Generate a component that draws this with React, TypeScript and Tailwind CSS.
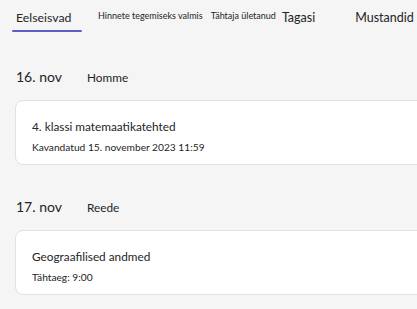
const sections = [
  { date: "16. nov", day: "Homme", title: "4. klassi matemaatikatehted", sub: "Kavandatud 15. november 2023 11:59" },
  { date: "17. nov", day: "Reede", title: "Geograafilised andmed", sub: "Tähtaeg: 9:00" },
];

export default function App() {
  return (
    <div className="w-[417px] h-[309px] overflow-hidden bg-[#f5f5f5] text-[#242424] font-['Lato',sans-serif] whitespace-nowrap">
      <div className="flex items-end h-[32px] pl-3">
        <div className="flex flex-col w-[70px]">
          <span className="text-[12.3px] leading-none mb-[6px] pl-1">Eelseisvad</span>
          <div className="h-[2px] w-full bg-[#5b5fc7] rounded-full" />
        </div>
        <span className="text-[9px] ml-4 mb-[12px] leading-none">Hinnete tegemiseks valmis</span>
        <span className="text-[9px] ml-2 mb-[12px] leading-none">Tähtaja ületanud</span>
        <span className="text-[12.5px] ml-[6px] mb-[8px] leading-none">Tagasi</span>
        <span className="text-[12.5px] ml-10 mb-[8px] leading-none">Mustandid</span>
      </div>

      {sections.map((s, i) => (
        <div key={s.date} className={i === 0 ? "mt-[38px]" : "mt-[35px]"}>
          <div className="flex items-baseline pl-4">
            <span className="text-[14px] leading-none w-[71px]">{s.date}</span>
            <span className="text-[11.8px] leading-none">{s.day}</span>
          </div>
          <div className="ml-[15px] -mr-4 mt-[16px] h-[65px] bg-white border border-[#e1e1e1] rounded-lg pl-4 pt-[19.5px]">
            <div className="text-[11.8px] leading-none">{s.title}</div>
            <div className="text-[10.2px] leading-none mt-[10px]">{s.sub}</div>
          </div>
        </div>
      ))}
    </div>
  );
}
